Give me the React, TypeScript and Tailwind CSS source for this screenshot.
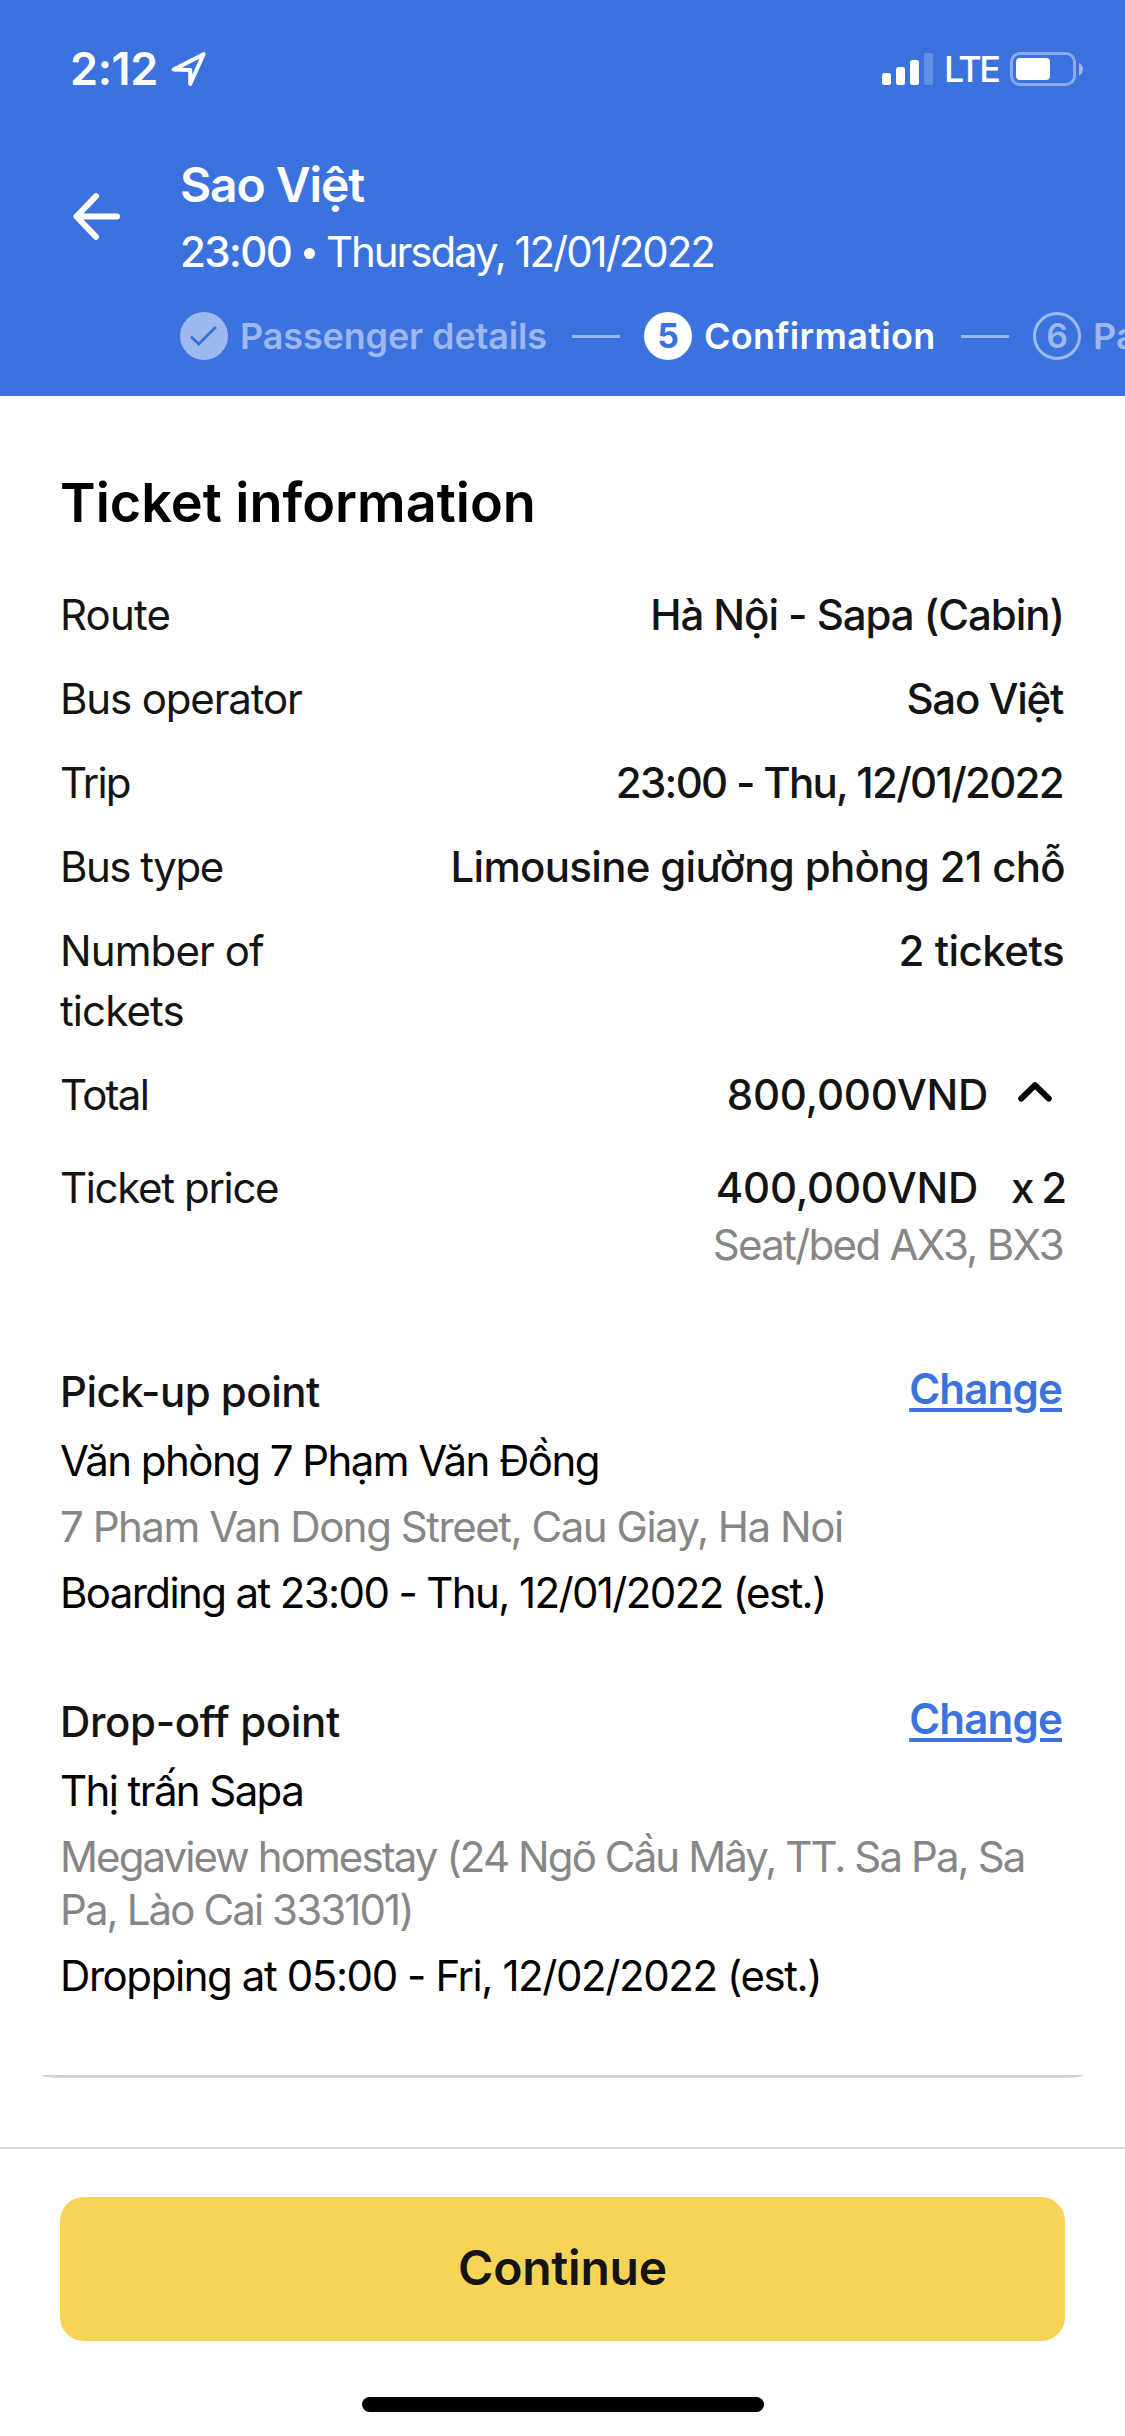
import type { ReactNode } from "react";

function StatusBar() {
  return (
    <div className="flex h-[54px] items-center justify-between pr-[42px] pl-[70px]">
      <div className="flex items-center">
        <span className="w-[101px] pt-[2px] text-[45px] leading-[54px] font-semibold tracking-[-0.4px]">2:12</span>
        <svg className="mt-[2px] h-[36px] w-[36px]" viewBox="0 0 36 36" fill="none" stroke="white" strokeWidth="4" strokeLinejoin="round" strokeLinecap="round">
          <path d="M2.6 18.6 L32.6 3.2 L19.2 33 L19.2 18.9 Z" />
        </svg>
      </div>
      <div className="flex items-center">
        <svg className="mt-[1px] h-[34px] w-[52px]" viewBox="0 0 52 34" fill="white">
          <rect x="0" y="21" width="9" height="12" rx="2.5" />
          <rect x="14" y="15" width="9" height="18" rx="2.5" />
          <rect x="28" y="8" width="9" height="25" rx="2.5" />
          <rect x="42" y="1" width="9" height="32" rx="2.5" fillOpacity="0.2" />
        </svg>
        <span className="ml-[10px] w-[66px] pt-[2px] text-[36px] leading-[54px] font-medium tracking-[-2.6px]">LTE</span>
        <svg className="mt-[2px] h-[34px] w-[73px]" viewBox="0 0 73 34">
          <rect x="1.5" y="1.5" width="63" height="31" rx="8.5" fill="none" stroke="white" strokeOpacity="0.4" strokeWidth="3" />
          <rect x="6" y="6" width="34" height="22" rx="4" fill="white" />
          <path d="M69 11 A7 7 0 0 1 69 23.5 Z" fill="white" fillOpacity="0.5" />
        </svg>
      </div>
    </div>
  );
}

function Stepper() {
  return (
    <div className="mt-[34px] flex h-[48px] items-center text-[36px] leading-[46px] font-semibold whitespace-nowrap text-[#9cb8ee]">
      <svg className="size-[48px] shrink-0" viewBox="0 0 48 48">
        <circle cx="24" cy="24" r="24" fill="#9cb8ee" />
        <path d="M11 24.5 L18.7 32 L36 15" fill="none" stroke="#3b72de" strokeWidth="2.8" />
      </svg>
      <span className="ml-[12px] w-[332px] shrink-0 tracking-[-0.15px]">Passenger details</span>
      <span className="mt-px h-[3px] w-[48px] shrink-0 bg-[#9cb8ee]" />
      <span className="ml-[24px] flex size-[48px] shrink-0 items-center justify-center rounded-full bg-white text-[34px] font-bold text-[#3b72de]">5</span>
      <span className="ml-[12px] w-[257px] shrink-0 tracking-[0.3px] text-white">Confirmation</span>
      <span className="mt-px h-[3px] w-[48px] shrink-0 bg-[#9cb8ee]" />
      <span className="ml-[24px] flex size-[48px] shrink-0 items-center justify-center rounded-full border-3 border-[#9cb8ee] text-[34px]">6</span>
      <span className="ml-[12px] shrink-0">Payment</span>
    </div>
  );
}

function Header() {
  return (
    <header className="h-[396px] overflow-hidden bg-[#3b72de] pt-[41px] text-white">
      <StatusBar />
      <div className="mt-[60px] flex">
        <div className="w-[180px] shrink-0 pt-[38px] pl-[73px]">
          <svg className="h-[47px] w-[48px]" viewBox="0 0 48 47" fill="none" stroke="white" strokeWidth="6" strokeLinecap="round" strokeLinejoin="round">
            <path d="M44 23.5 H3.5 M23 3.2 L3.5 23.5 L23 43.8" />
          </svg>
        </div>
        <div className="min-w-0 flex-1">
          <h1 className="text-[48px] leading-[60px] font-semibold tracking-[-1.1px]">Sao Việt</h1>
          <p className="mt-[10px] flex text-[42px] leading-[54px] whitespace-nowrap">
            <span className="w-[124px] font-medium tracking-[-1.6px]">23:00</span>
            <span className="mt-[23px] mr-[11px] size-[11px] rounded-full bg-white" />
            <span className="tracking-[-2.06px]">Thursday, 12/01/2022</span>
          </p>
          <div className="-mt-px">
            <Stepper />
          </div>
        </div>
      </div>
    </header>
  );
}

function Row({ label, labelClass, children }: { label: string; labelClass: string; children: ReactNode }) {
  return (
    <div className="flex items-start justify-between leading-[60px]">
      <span className={labelClass}>{label}</span>
      {children}
    </div>
  );
}

function StopHeading({ title, titleClass }: { title: string; titleClass: string }) {
  return (
    <div className="flex h-[53px] justify-between">
      <h3 className={titleClass}>{title}</h3>
      <a className="-mt-[3px] mr-[3px] font-semibold tracking-[-0.8px] text-[#3b72de] underline decoration-[4px] underline-offset-[4px]">Change</a>
    </div>
  );
}

export default function App() {
  return (
    <div className="flex h-[2436px] w-[1125px] flex-col overflow-hidden bg-white font-['Inter','Noto_Sans',sans-serif] text-[42px] text-[#141414]">
      <Header />
      <main className="flex-1">
        <section className="flex h-[1682px] flex-col px-[60px] pt-[71px]">
          <h2 className="text-[54px] leading-[72px] font-semibold text-black">Ticket information</h2>
          <div className="mt-[46px] flex flex-col gap-6">
            <Row label="Route" labelClass="tracking-[-0.8px]">
              <span className="mr-px font-medium tracking-[-1.04px]">Hà Nội - Sapa (Cabin)</span>
            </Row>
            <Row label="Bus operator" labelClass="tracking-[-1.15px]">
              <span className="mr-[2px] font-medium tracking-[-1.3px]">Sao Việt</span>
            </Row>
            <Row label="Trip" labelClass="tracking-[-1.9px]">
              <span className="mr-[2px] font-medium tracking-[-1.69px]">23:00 - Thu, 12/01/2022</span>
            </Row>
            <Row label="Bus type" labelClass="tracking-[-1.5px]">
              <span className="font-medium tracking-[-0.68px]">Limousine giường phòng 21 chỗ</span>
            </Row>
            <Row label="Number of tickets" labelClass="w-[280px] tracking-[-0.9px]">
              <span className="mr-px font-medium tracking-[-0.5px]">2 tickets</span>
            </Row>
            <Row label="Total" labelClass="tracking-[-1.7px]">
              <span className="flex items-start">
                <span className="font-medium tracking-[-0.25px]">800,000VND</span>
                <svg className="mt-[17px] mr-[13px] ml-[30px] h-[20px] w-[34px]" viewBox="0 0 34 20" fill="none" stroke="black" strokeWidth="6" strokeLinecap="round" strokeLinejoin="round">
                  <path d="M3.2 16.6 L17 3.2 L30.8 16.6" />
                </svg>
              </span>
            </Row>
          </div>
          <div className="mt-[33px]">
            <Row label="Ticket price" labelClass="tracking-[-1.34px]">
              <span className="flex font-medium">
                <span className="mr-[33px] tracking-[-0.25px]">400,000VND</span>
                <span className="tracking-[-2.2px]">x 2</span>
              </span>
            </Row>
            <p className="mr-[2px] text-right leading-[54px] tracking-[-1.69px] text-[#868686]">Seat/bed AX3, BX3</p>
          </div>

          <div className="mt-[93px] leading-[53px] text-black">
            <StopHeading title="Pick-up point" titleClass="font-medium tracking-[-0.52px] text-[#141414]" />
            <div className="mt-[16px] flex flex-col gap-[13px] whitespace-nowrap">
              <p className="tracking-[-1.55px]">Văn phòng 7 Phạm Văn Đồng</p>
              <p className="tracking-[-1.47px] text-[#868686]">7 Pham Van Dong Street, Cau Giay, Ha Noi</p>
              <p className="tracking-[-1.62px]">Boarding at 23:00 - Thu, 12/01/2022 (est.)</p>
            </div>
          </div>

          <div className="mt-[76px] leading-[53px] text-black">
            <StopHeading title="Drop-off point" titleClass="font-medium tracking-[-0.34px] text-[#141414]" />
            <div className="mt-[16px] flex flex-col gap-[13px] whitespace-nowrap">
              <p className="tracking-[-1.6px]">Thị trấn Sapa</p>
              <p className="tracking-[-1.9px] text-[#868686]">
                Megaview homestay (24 Ngõ Cầu Mây, TT. Sa Pa, Sa
                <br />
                Pa, Lào Cai 333101)
              </p>
              <p className="tracking-[-1.42px]">Dropping at 05:00 - Fri, 12/02/2022 (est.)</p>
            </div>
          </div>
          <div className="-mx-[18px] mt-auto h-[3px] bg-[#d2d2d2] [border-radius:0_0_20px_20px/0_0_3px_3px]" />
        </section>
      </main>
      <footer className="flex h-[289px] flex-col items-center border-t-2 border-[#dedede] bg-white px-[60px] pt-[48px]">
        <button className="h-[144px] w-full rounded-[24px] bg-[#f7d456] pb-[3px] text-[48px] leading-[60px] font-semibold tracking-[-0.2px]">Continue</button>
        <div className="mt-[56px] h-[15px] w-[402px] rounded-full bg-black" />
      </footer>
    </div>
  );
}
